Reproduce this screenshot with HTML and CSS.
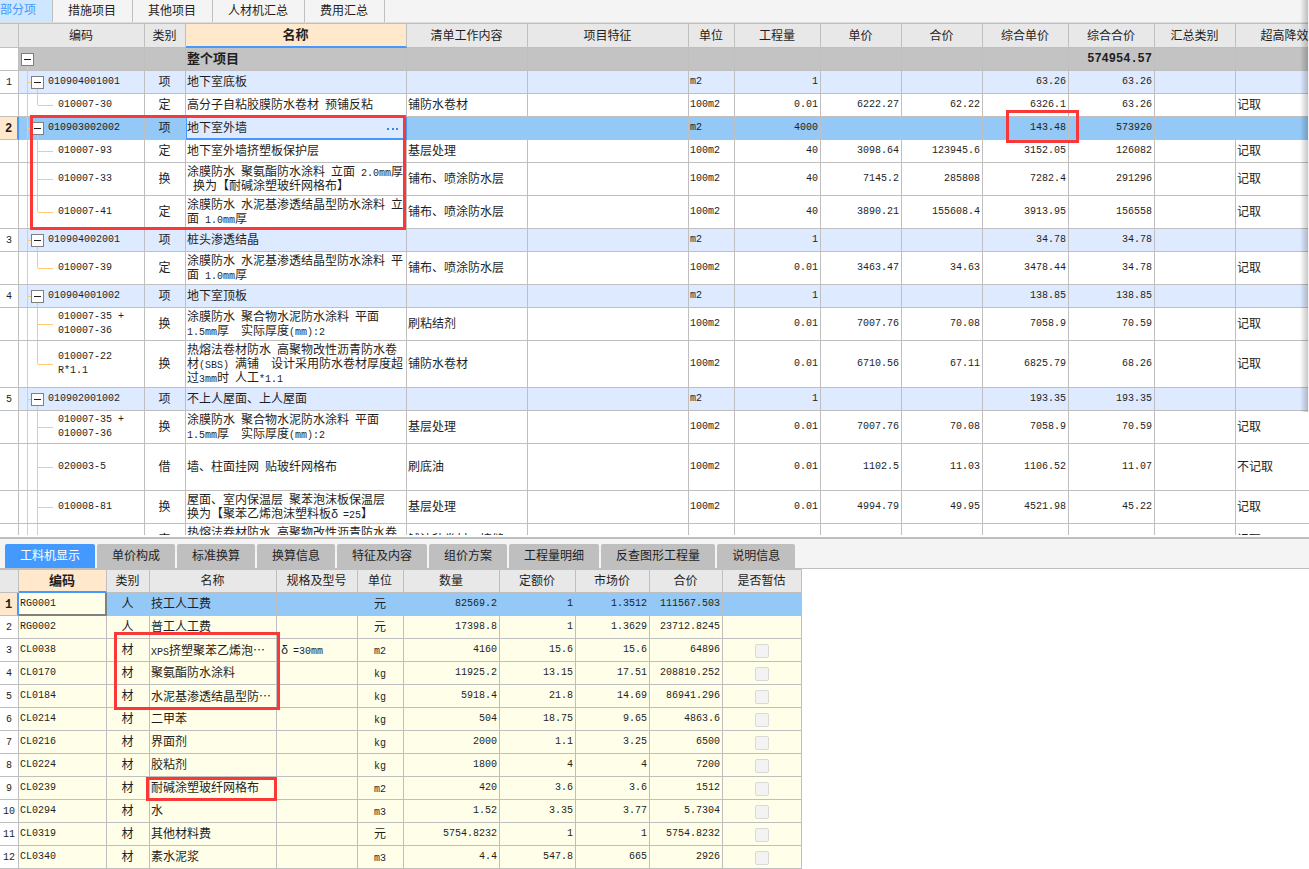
FILE: index.html
```html
<!DOCTYPE html>
<html lang="zh-CN">
<head>
<meta charset="utf-8">
<title>工程计价</title>
<link rel="stylesheet" href="styles.css">
</head>
<body>
<nav class="tabs">
  <button class="tab active">部分项</button><button class="tab">措施项目</button><button class="tab">其他项目</button><button class="tab">人材机汇总</button><button class="tab">费用汇总</button>
</nav>
<main class="pane bill">
<table class="grid bill-grid">
<colgroup><col class="w19"><col class="w126"><col class="w41"><col class="w221"><col class="w121"><col class="w161"><col class="w46"><col class="w86"><col class="w81"><col class="w81"><col class="w86"><col class="w86"><col class="w81"><col class="w123"></colgroup>
<thead>
<tr><th></th><th>编码</th><th>类别</th><th class="sorted">名称</th><th>清单工作内容</th><th>项目特征</th><th>单位</th><th>工程量</th><th>单价</th><th>合价</th><th>综合单价</th><th>综合合价</th><th>汇总类别</th><th>超高降效计取</th></tr>
</thead>
<tbody>
<tr class="root"><td></td><td><button class="fold" aria-label="折叠"></button></td><td></td><td>整个项目</td><td></td><td></td><td></td><td></td><td></td><td></td><td></td><td>574954.57</td><td></td><td></td></tr>
<tr class="item"><td>1</td><td><div class="node"><button class="fold" aria-label="折叠"></button>010904001001</div></td><td>项</td><td>地下室底板</td><td></td><td></td><td>m2</td><td>1</td><td></td><td></td><td>63.26</td><td>63.26</td><td></td><td></td></tr>
<tr class="leaf last"><td></td><td>010007-30</td><td>定</td><td>高分子自粘胶膜防水卷材<span> </span>预铺反粘</td><td>铺防水卷材</td><td></td><td>100m2</td><td>0.01</td><td>6222.27</td><td>62.22</td><td>6326.1</td><td>63.26</td><td></td><td>记取</td></tr>
<tr class="item selected"><td>2</td><td><div class="node"><button class="fold" aria-label="折叠"></button>010903002002</div></td><td>项</td><td><div class="editing">地下室外墙<button class="more" aria-label="更多"><svg width="12" height="2" viewBox="0 0 12 2"><path d="M0 0h2v2H0zM5 0h2v2H5zM9 0h2v2H9z"/></svg></button></div></td><td></td><td></td><td>m2</td><td>4000</td><td></td><td></td><td>143.48</td><td>573920</td><td></td><td></td></tr>
<tr class="leaf"><td></td><td>010007-93</td><td>定</td><td>地下室外墙挤塑板保护层</td><td>基层处理</td><td></td><td>100m2</td><td>40</td><td>3098.64</td><td>123945.6</td><td>3152.05</td><td>126082</td><td></td><td>记取</td></tr>
<tr class="leaf"><td></td><td>010007-33</td><td>换</td><td>涂膜防水<span> </span>聚氨酯防水涂料<span> </span>立面<span> 2.0mm</span>厚<br><span> </span>换为【耐碱涂塑玻纤网格布】</td><td>铺布、喷涂防水层</td><td></td><td>100m2</td><td>40</td><td>7145.2</td><td>285808</td><td>7282.4</td><td>291296</td><td></td><td>记取</td></tr>
<tr class="leaf last"><td></td><td>010007-41</td><td>定</td><td>涂膜防水<span> </span>水泥基渗透结晶型防水涂料<span> </span>立<br>面<span> 1.0mm</span>厚</td><td>铺布、喷涂防水层</td><td></td><td>100m2</td><td>40</td><td>3890.21</td><td>155608.4</td><td>3913.95</td><td>156558</td><td></td><td>记取</td></tr>
<tr class="item"><td>3</td><td><div class="node"><button class="fold" aria-label="折叠"></button>010904002001</div></td><td>项</td><td>桩头渗透结晶</td><td></td><td></td><td>m2</td><td>1</td><td></td><td></td><td>34.78</td><td>34.78</td><td></td><td></td></tr>
<tr class="leaf last"><td></td><td>010007-39</td><td>定</td><td>涂膜防水<span> </span>水泥基渗透结晶型防水涂料<span> </span>平<br>面<span> 1.0mm</span>厚</td><td>铺布、喷涂防水层</td><td></td><td>100m2</td><td>0.01</td><td>3463.47</td><td>34.63</td><td>3478.44</td><td>34.78</td><td></td><td>记取</td></tr>
<tr class="item"><td>4</td><td><div class="node"><button class="fold" aria-label="折叠"></button>010904001002</div></td><td>项</td><td>地下室顶板</td><td></td><td></td><td>m2</td><td>1</td><td></td><td></td><td>138.85</td><td>138.85</td><td></td><td></td></tr>
<tr class="leaf"><td></td><td>010007-35 +<br>010007-36</td><td>换</td><td>涂膜防水<span> </span>聚合物水泥防水涂料<span> </span>平面<br><span>1.5mm</span>厚<span>  </span>实际厚度<span>(mm):2</span></td><td>刷粘结剂</td><td></td><td>100m2</td><td>0.01</td><td>7007.76</td><td>70.08</td><td>7058.9</td><td>70.59</td><td></td><td>记取</td></tr>
<tr class="leaf last"><td></td><td>010007-22<br>R*1.1</td><td>换</td><td>热熔法卷材防水<span> </span>高聚物改性沥青防水卷<br>材<span>(SBS) </span>满铺<span>  </span>设计采用防水卷材厚度超<br>过<span>3mm</span>时<span> </span>人工<span>*1.1</span></td><td>铺防水卷材</td><td></td><td>100m2</td><td>0.01</td><td>6710.56</td><td>67.11</td><td>6825.79</td><td>68.26</td><td></td><td>记取</td></tr>
<tr class="item"><td>5</td><td><div class="node"><button class="fold" aria-label="折叠"></button>010902001002</div></td><td>项</td><td>不上人屋面、上人屋面</td><td></td><td></td><td>m2</td><td>1</td><td></td><td></td><td>193.35</td><td>193.35</td><td></td><td></td></tr>
<tr class="leaf"><td></td><td>010007-35 +<br>010007-36</td><td>换</td><td>涂膜防水<span> </span>聚合物水泥防水涂料<span> </span>平面<br><span>1.5mm</span>厚<span>  </span>实际厚度<span>(mm):2</span></td><td>基层处理</td><td></td><td>100m2</td><td>0.01</td><td>7007.76</td><td>70.08</td><td>7058.9</td><td>70.59</td><td></td><td>记取</td></tr>
<tr class="leaf tall"><td></td><td>020003-5</td><td>借</td><td>墙、柱面挂网<span> </span>贴玻纤网格布</td><td>刷底油</td><td></td><td>100m2</td><td>0.01</td><td>1102.5</td><td>11.03</td><td>1106.52</td><td>11.07</td><td></td><td>不记取</td></tr>
<tr class="leaf"><td></td><td>010008-81</td><td>换</td><td>屋面、室内保温层<span> </span>聚苯泡沫板保温层<br>换为【聚苯乙烯泡沫塑料板<span class="wide">δ</span><span>=25</span>】</td><td>基层处理</td><td></td><td>100m2</td><td>0.01</td><td>4994.79</td><td>49.95</td><td>4521.98</td><td>45.22</td><td></td><td>记取</td></tr>
<tr class="leaf partial"><td></td><td></td><td>定</td><td>热熔法卷材防水<span> </span>高聚物改性沥青防水卷</td><td>铺油毡卷材、接缝</td><td></td><td></td><td></td><td></td><td></td><td></td><td></td><td></td><td>记取</td></tr>
</tbody>
</table>
<div class="mark mark-group"></div>
<div class="mark mark-price"></div>
</main>
<section class="detail">
<nav class="subtabs">
  <button class="subtab active">工料机显示</button><button class="subtab">单价构成</button><button class="subtab">标准换算</button><button class="subtab">换算信息</button><button class="subtab">特征及内容</button><button class="subtab">组价方案</button><button class="subtab">工程量明细</button><button class="subtab">反查图形工程量</button><button class="subtab">说明信息</button>
</nav>
<div class="pane">
<table class="grid res-grid">
<colgroup><col class="w19"><col class="w88"><col class="w43"><col class="w127"><col class="w81"><col class="w46"><col class="w96"><col class="w76"><col class="w74"><col class="w73"><col class="w79"></colgroup>
<thead>
<tr><th></th><th class="sorted">编码</th><th>类别</th><th>名称</th><th>规格及型号</th><th>单位</th><th>数量</th><th>定额价</th><th>市场价</th><th>合价</th><th>是否暂估</th></tr>
</thead>
<tbody>
<tr class="selected"><td>1</td><td>RG0001</td><td>人</td><td>技工人工费</td><td></td><td>元</td><td>82569.2</td><td>1</td><td>1.3512</td><td>111567.503</td><td></td></tr>
<tr><td>2</td><td>RG0002</td><td>人</td><td>普工人工费</td><td></td><td>元</td><td>17398.8</td><td>1</td><td>1.3629</td><td>23712.8245</td><td></td></tr>
<tr><td>3</td><td>CL0038</td><td>材</td><td><span>XPS</span>挤塑聚苯乙烯泡<i>⋯</i></td><td><span class="wide">δ</span><span>=30mm</span></td><td><span>m2</span></td><td>4160</td><td>15.6</td><td>15.6</td><td>64896</td><td><input type="checkbox" disabled aria-label="是否暂估"></td></tr>
<tr><td>4</td><td>CL0170</td><td>材</td><td>聚氨酯防水涂料</td><td></td><td><span>kg</span></td><td>11925.2</td><td>13.15</td><td>17.51</td><td>208810.252</td><td><input type="checkbox" disabled aria-label="是否暂估"></td></tr>
<tr><td>5</td><td>CL0184</td><td>材</td><td>水泥基渗透结晶型防<i>⋯</i></td><td></td><td><span>kg</span></td><td>5918.4</td><td>21.8</td><td>14.69</td><td>86941.296</td><td><input type="checkbox" disabled aria-label="是否暂估"></td></tr>
<tr><td>6</td><td>CL0214</td><td>材</td><td>二甲苯</td><td></td><td><span>kg</span></td><td>504</td><td>18.75</td><td>9.65</td><td>4863.6</td><td><input type="checkbox" disabled aria-label="是否暂估"></td></tr>
<tr><td>7</td><td>CL0216</td><td>材</td><td>界面剂</td><td></td><td><span>kg</span></td><td>2000</td><td>1.1</td><td>3.25</td><td>6500</td><td><input type="checkbox" disabled aria-label="是否暂估"></td></tr>
<tr><td>8</td><td>CL0224</td><td>材</td><td>胶粘剂</td><td></td><td><span>kg</span></td><td>1800</td><td>4</td><td>4</td><td>7200</td><td><input type="checkbox" disabled aria-label="是否暂估"></td></tr>
<tr><td>9</td><td>CL0239</td><td>材</td><td>耐碱涂塑玻纤网格布</td><td></td><td><span>m2</span></td><td>420</td><td>3.6</td><td>3.6</td><td>1512</td><td><input type="checkbox" disabled aria-label="是否暂估"></td></tr>
<tr><td>10</td><td>CL0294</td><td>材</td><td>水</td><td></td><td><span>m3</span></td><td>1.52</td><td>3.35</td><td>3.77</td><td>5.7304</td><td><input type="checkbox" disabled aria-label="是否暂估"></td></tr>
<tr><td>11</td><td>CL0319</td><td>材</td><td>其他材料费</td><td></td><td>元</td><td>5754.8232</td><td>1</td><td>1</td><td>5754.8232</td><td><input type="checkbox" disabled aria-label="是否暂估"></td></tr>
<tr><td>12</td><td>CL0340</td><td>材</td><td>素水泥浆</td><td></td><td><span>m3</span></td><td>4.4</td><td>547.8</td><td>665</td><td>2926</td><td><input type="checkbox" disabled aria-label="是否暂估"></td></tr>
</tbody>
</table>
<div class="mark mark-materials"></div>
<div class="mark mark-mesh"></div>
</div>
</section>
<div class="window-edge"></div>
</body>
</html>
```
FILE: styles.css
```css
* { box-sizing: border-box; }
body {
  margin: 0;
  height: 100vh;
  display: flex;
  flex-direction: column;
  overflow: hidden;
  position: relative;
  background: #fff;
  color: #1e1e1e;
  font: 12px/14px "Liberation Mono", "Noto Sans CJK SC", monospace;
}
button { font: inherit; color: inherit; border: 0; margin: 0; padding: 0; background: none; }

/* top tabs */
.tabs { display: flex; flex: none; height: 23px; background: #f4f4f4; border-bottom: 1px solid #dcdcdc; }
.tab { padding: 2px 16px 0 15px; border-right: 1px solid #c0c0c0; height: 22px; }
.tab.active { padding: 0 16px 0 0; background: #cce7ff; color: #4499ff; }

/* grids */
.pane { position: relative; }
.bill { flex: 1; min-height: 0; overflow: hidden; margin-bottom: 2px; }
.grid { table-layout: fixed; width: 0; border-spacing: 0; border-top: 1px solid #bfbfbf; }
.w19 { width: 19px; } .w41 { width: 41px; } .w43 { width: 43px; } .w46 { width: 46px; }
.w73 { width: 73px; } .w74 { width: 74px; } .w76 { width: 76px; } .w79 { width: 79px; }
.w81 { width: 81px; } .w86 { width: 86px; } .w88 { width: 88px; } .w96 { width: 96px; }
.w121 { width: 121px; } .w123 { width: 123px; } .w126 { width: 126px; } .w127 { width: 127px; }
.w161 { width: 161px; } .w221 { width: 221px; }
.grid th, .grid td {
  height: 23px;
  padding: 3px 2px 1px 1px;
  border-right: 1px solid #bfbfbf;
  border-bottom: 1px solid #bfbfbf;
  white-space: pre;
  text-align: left;
  vertical-align: middle;
}
.grid th { background: #e8e8e8; font-weight: 400; text-align: center; }
.bill-grid th { height: 24px; }
.grid th.sorted { background: #ffe8cc; border-bottom: 2px solid #4499ff; font-weight: 700; font-size: 13px; }
.grid span { font-size: 10px; line-height: 1; }
.grid .wide { display: inline-block; width: 12px; font-size: 12px; }
.grid td:first-child { background: #fff; text-align: center; padding: 3px 1px 1px; font-size: 10px; }
.grid td:nth-child(2) { font-size: 10px; padding-top: 2px; padding-bottom: 2px; }
.grid td:nth-child(3) { text-align: center; }
.grid tr.selected td { background-color: #93c8f7; }
.grid tr.selected td:first-child { background: #ffe8cc; border-right: 2px solid #4499ff; font-weight: 700; font-size: 12px; }

/* bill grid */
.bill-grid td:nth-child(7) { font-size: 10px; padding: 2px 2px 2px 1px; }
.bill-grid td:nth-child(n+8):nth-child(-n+12) { font-size: 10px; text-align: right; padding: 2px 2px 2px 1px; }
.bill-grid td:last-child { padding-left: 1px; }
.bill-grid .root td:not(:first-child) { background-color: #c3c3c3; font-weight: 700; }
.bill-grid .root td:nth-child(4) { font-size: 13px; }
.bill-grid .root td:nth-child(12) { font-size: 12px; }
.bill-grid .item td:not(:first-child) { background-color: #deeaff; }
.bill-grid .tall td { height: 47px; }
.bill-grid .partial td { height: 33px; }
.bill-grid .partial td:nth-child(4) { vertical-align: top; }
.bill-grid tr.selected td:not(:first-child) { background-color: #93c8f7; }
.bill-grid tr.selected td:nth-child(4) {
  background-color: #deeaff;
  border-right-color: #4499ff;
  border-bottom-color: #4499ff;
  box-shadow: inset 1px -1px #4499ff;
}
.editing { display: flex; align-items: center; justify-content: space-between; padding-right: 5px; }
.more svg { display: block; fill: #3388dd; }

/* tree guides drawn behind the code column */
.bill-grid .root td:nth-child(2) {
  padding-left: 2px;
  background-image: linear-gradient(#ffc878, #ffc878);
  background-position: 8px 100%;
  background-size: 1px 50%;
  background-repeat: no-repeat;
}
.bill-grid .item td:nth-child(2) {
  padding-left: 12px;
  background-image: linear-gradient(#ffc878, #ffc878), linear-gradient(#ffc878, #ffc878), linear-gradient(#ffc878, #ffc878);
  background-position: 8px 0, 9px 50%, 18px 100%;
  background-size: 1px 100%, 3px 1px, 1px 50%;
  background-repeat: no-repeat;
}
.bill-grid .leaf td:nth-child(2) {
  padding-left: 39px;
  background-image: linear-gradient(#ffc878, #ffc878), linear-gradient(#ffc878, #ffc878), linear-gradient(#ffc878, #ffc878);
  background-position: 8px 0, 19px 50%, 18px 0;
  background-size: 1px 100%, 15px 1px, 1px 100%;
  background-repeat: no-repeat;
}
.bill-grid .leaf.last td:nth-child(2) { background-size: 1px 100%, 15px 1px, 1px 50%; }
.node { display: flex; align-items: center; gap: 4px; }
.fold {
  display: block;
  width: 13px;
  height: 13px;
  border: 1px solid #7f7f7f;
  background: linear-gradient(#1e1e1e, #1e1e1e) center / 7px 1px no-repeat #fff;
}

/* detail panel */
.detail { flex: none; border-top: 2px solid #bfbfbf; }
.subtabs { display: flex; gap: 2px; padding: 5px 5px 0; background: #f4f4f4; border-bottom: 1px solid #bfbfbf; }
.subtab { height: 24px; padding: 2px 15px 0; background: #bfbfbf; border-radius: 2px 2px 0 0; }
.subtab.active { background: #4499ff; color: #fff; }
.res-grid td { background: #ffffe9; }
.res-grid td:nth-child(5) { padding-left: 4px; }
.res-grid td:nth-child(6), .res-grid td:nth-child(11) { text-align: center; }
.res-grid td:nth-child(n+7):nth-child(-n+10) { font-size: 10px; text-align: right; padding: 2px 2px 2px 1px; }
.res-grid i { font-style: normal; font-family: "Noto Sans CJK SC", sans-serif; line-height: 1; }
.res-grid tr.selected td:nth-child(2) {
  background: #ffffe9;
  border-right-color: #808080;
  border-bottom-color: #808080;
  box-shadow: inset -1px -1px #808080;
}
.res-grid input {
  appearance: none;
  display: block;
  width: 14px;
  height: 14px;
  margin: 0 auto;
  border: 1px solid #d9d9d9;
  border-radius: 2px;
  background: #f3f3f3;
}

/* annotations laid over the grids */
.mark { position: absolute; border: 3px solid #fa3838; pointer-events: none; }
.mark-group { left: 30px; top: 92px; width: 376px; height: 115px; }
.mark-price { left: 1006px; top: 87px; width: 73px; height: 33px; }
.mark-materials { left: 114px; top: 63px; width: 166px; height: 78px; }
.mark-mesh { left: 146px; top: 208px; width: 131px; height: 24px; }

.window-edge {
  position: absolute;
  top: 0;
  right: 0;
  width: 9px;
  height: 412px;
  border-right: 1px solid #f4f4f4;
  background: linear-gradient(to right, rgba(0, 0, 0, 0), rgba(0, 0, 0, .22));
}
```
